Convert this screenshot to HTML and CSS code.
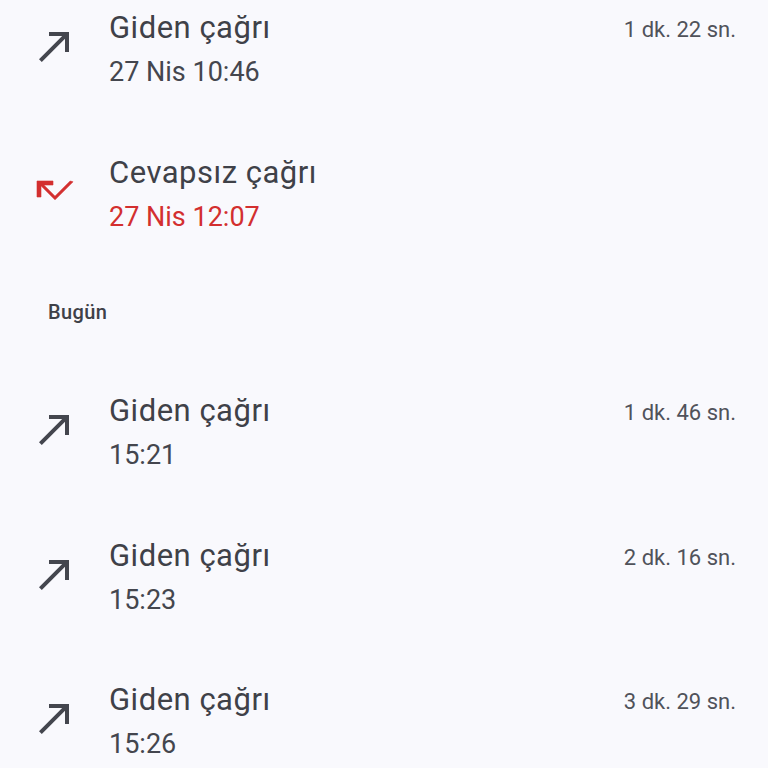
FILE: index.html
```html
<!DOCTYPE html>
<html lang="tr">
<head>
    <meta charset="UTF-8">
    <meta name="viewport" content="width=device-width, initial-scale=1.0">
    <title>Arama geçmişi</title>
    <link rel="stylesheet" href="styles.css">
</head>
<body>
    <div class="call-list">
        <div class="call-row">
            <svg class="call-icon" viewBox="0 0 24 24"><path class="out" d="M9 5v2h6.59L4 18.59 5.41 20 17 8.41V15h2V5z"/></svg>
            <div class="call-info">
                <div class="call-title">Giden çağrı</div>
                <div class="call-time">27 Nis 10:46</div>
            </div>
            <div class="call-duration">1 dk. 22 sn.</div>
        </div>

        <div class="call-row">
            <svg class="call-icon" viewBox="0 0 24 24"><path class="missed" d="M19.59 7L12 14.59 6.41 9H11V7H3v8h2V9.41l7 7 9-9z"/></svg>
            <div class="call-info">
                <div class="call-title">Cevapsız çağrı</div>
                <div class="call-time missed-time">27 Nis 12:07</div>
            </div>
        </div>

        <div class="day-header">Bugün</div>

        <div class="call-row">
            <svg class="call-icon" viewBox="0 0 24 24"><path class="out" d="M9 5v2h6.59L4 18.59 5.41 20 17 8.41V15h2V5z"/></svg>
            <div class="call-info">
                <div class="call-title">Giden çağrı</div>
                <div class="call-time">15:21</div>
            </div>
            <div class="call-duration">1 dk. 46 sn.</div>
        </div>

        <div class="call-row">
            <svg class="call-icon" viewBox="0 0 24 24"><path class="out" d="M9 5v2h6.59L4 18.59 5.41 20 17 8.41V15h2V5z"/></svg>
            <div class="call-info">
                <div class="call-title">Giden çağrı</div>
                <div class="call-time">15:23</div>
            </div>
            <div class="call-duration">2 dk. 16 sn.</div>
        </div>

        <div class="call-row">
            <svg class="call-icon" viewBox="0 0 24 24"><path class="out" d="M9 5v2h6.59L4 18.59 5.41 20 17 8.41V15h2V5z"/></svg>
            <div class="call-info">
                <div class="call-title">Giden çağrı</div>
                <div class="call-time">15:26</div>
            </div>
            <div class="call-duration">3 dk. 29 sn.</div>
        </div>
    </div>
</body>
</html>
```

FILE: styles.css
```css
body {
    margin: 0;
    padding: 0;
    background-color: #f9f9fd;
    font-family: Roboto, "Noto Sans", sans-serif;
    color: #44464e;
    overflow: hidden;
}

.call-list {
    margin-top: -22px;
}

.call-row {
    display: flex;
    align-items: flex-start;
    padding: 28px 32px 28.5px 31px;
}

.call-icon {
    width: 48px;
    height: 48px;
    margin-top: 16px;
    margin-right: 30px;
    flex-shrink: 0;
}

.call-icon .out {
    fill: #44464e;
}

.call-icon .missed {
    fill: #d32f2f;
    stroke: #d32f2f;
    stroke-width: 0.3;
}

.call-info {
    flex: 1;
}

.call-title {
    font-size: 31px;
    letter-spacing: 0.5px;
    line-height: 44px;
    color: #3f4148;
}

.call-time {
    font-size: 27px;
    line-height: 44px;
}

.missed-time {
    color: #d32f2f;
}

.call-duration {
    font-size: 22px;
    line-height: 44px;
    padding-top: 2px;
    color: #50525a;
}

/* Section title between days */
.day-header {
    font-size: 20px;
    font-weight: 500;
    letter-spacing: 0.4px;
    line-height: 22px;
    padding: 34px 0 38px 48px;
    color: #3f4148;
}
```
